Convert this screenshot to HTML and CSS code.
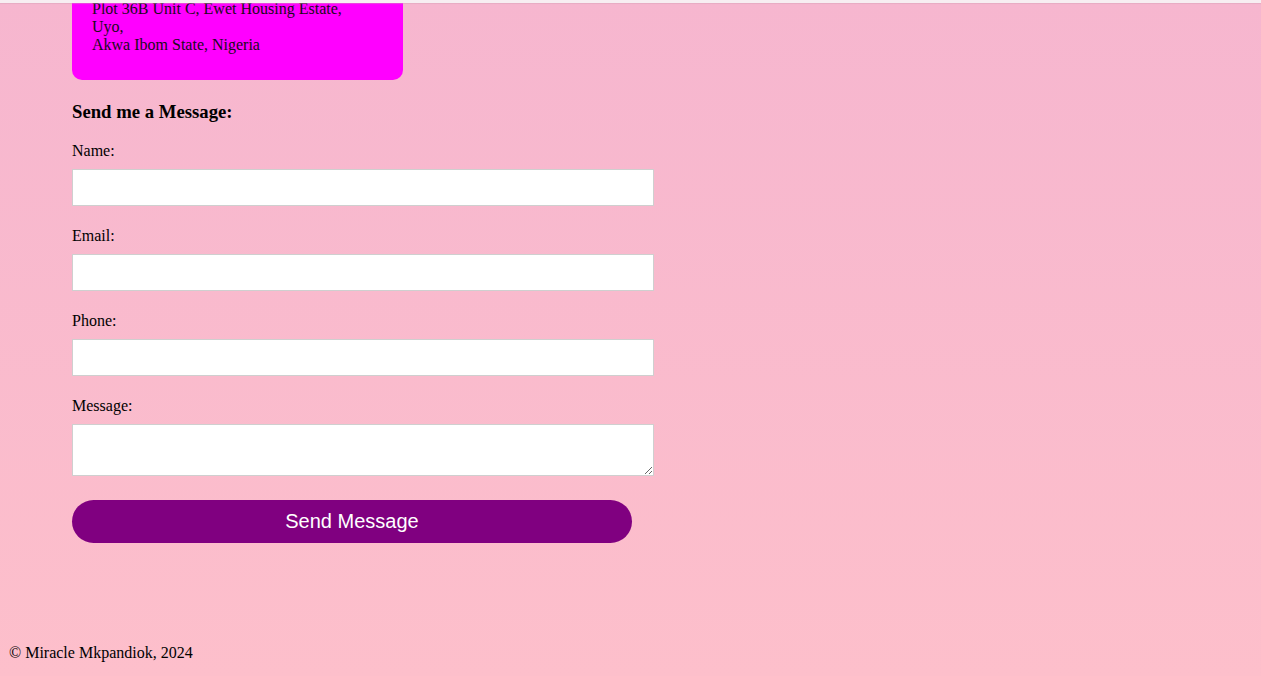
FILE: index.html
```html
<!DOCTYPE html>
<html lang="en">
<head>
<meta charset="utf-8">
<title>Contact</title>
<link rel="stylesheet" href="styles.css">
</head>
<body>
<div class="topbar"></div>
<main class="content">
  <div class="address">
    Plot 36B Unit C, Ewet Housing Estate,<br>
    Uyo,<br>
    Akwa Ibom State, Nigeria
  </div>
  <h3 class="form-title">Send me a Message:</h3>
  <form class="contact-form">
    <label class="field-label" for="name">Name:</label>
    <input class="field-input" id="name" type="text">
    <label class="field-label" for="email">Email:</label>
    <input class="field-input" id="email" type="email">
    <label class="field-label" for="phone">Phone:</label>
    <input class="field-input" id="phone" type="tel">
    <label class="field-label" for="message">Message:</label>
    <textarea class="field-textarea" id="message"></textarea>
    <button class="send-btn" type="button">Send Message</button>
  </form>
</main>
<footer class="footer">© Miracle Mkpandiok, 2024</footer>
</body>
</html>
```

FILE: styles.css
```css
html, body {
  height: 100%;
}
body {
  margin: 0;
  font-family: "Liberation Serif", "Times New Roman", serif;
  font-size: 16px;
  line-height: 18px;
  color: #000;
  background: linear-gradient(to bottom, #f6b6cf 0%, #fdbfcb 100%);
  display: flex;
  flex-direction: column;
  min-height: 100vh;
}
.topbar {
  position: fixed;
  top: 0;
  left: 0;
  right: 0;
  height: 3px;
  background: #f7eef2;
  box-shadow: 0 1px 1px rgba(210, 160, 180, 0.45);
  z-index: 5;
}
.content {
  padding: 0 72px;
  flex: 1;
}
.address {
  width: 331px;
  box-sizing: border-box;
  background: #ff00ff;
  border-radius: 0 0 10px 10px;
  padding: 0 20px 26px;
  color: #1a0a1a;
}
.form-title {
  font-size: 18.72px;
  line-height: 22px;
  font-weight: bold;
  margin: 21px 0 18px;
}
.contact-form {
  display: flex;
  flex-direction: column;
  align-items: flex-start;
}
.field-label {
  display: block;
  padding-top: 1px;
  margin-bottom: 9px;
}
.field-input,
.field-textarea {
  width: 582px;
  box-sizing: border-box;
  border: 1px solid #cfcfcf;
  background: #fff;
  margin: 0 0 20px;
  padding: 8px;
  font-family: inherit;
  font-size: 16px;
}
.field-input {
  height: 37px;
}
.field-textarea {
  height: 52px;
  margin-bottom: 24px;
  resize: both;
}
.send-btn {
  width: 560px;
  height: 43px;
  border: none;
  border-radius: 22px;
  background: #800080;
  color: #fff;
  font-family: "Liberation Sans", Arial, sans-serif;
  font-size: 20px;
  cursor: pointer;
}
.footer {
  padding: 0 9px 14px;
}
```
